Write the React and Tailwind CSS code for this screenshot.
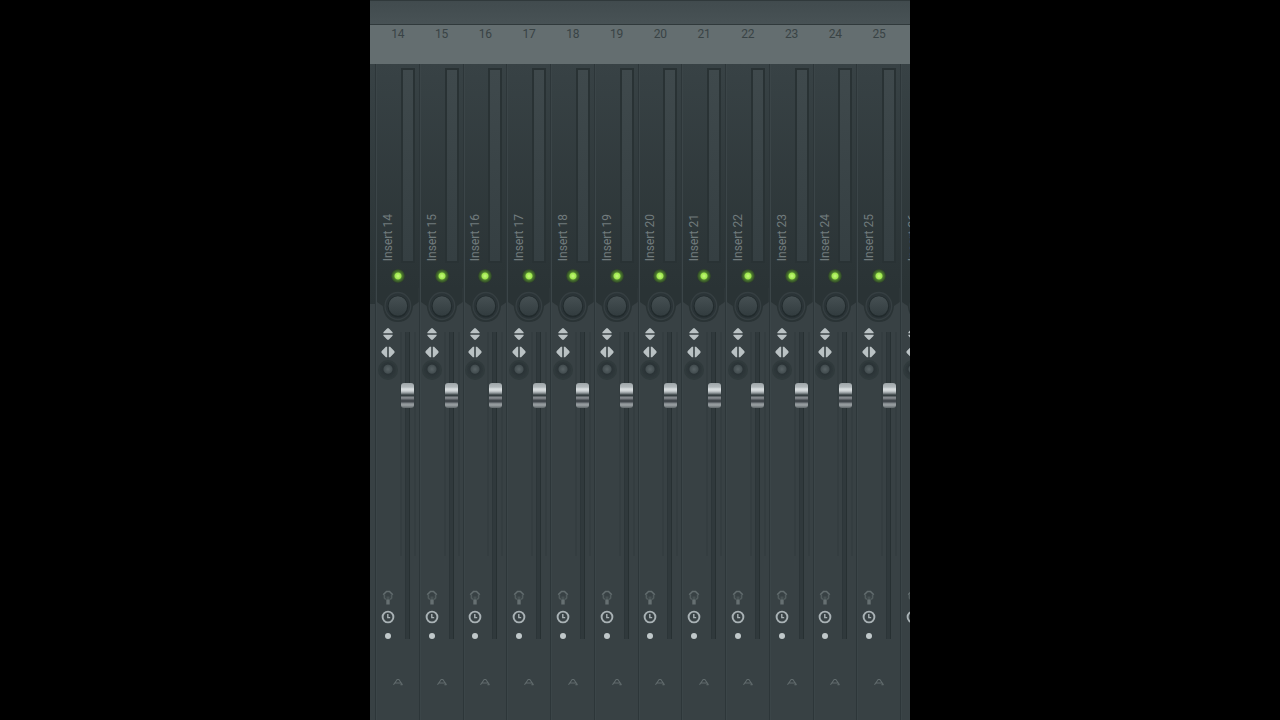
import { useState } from 'react'
import clsx from 'clsx'

const TRACKS = [14, 15, 16, 17, 18, 19, 20, 21, 22, 23, 24, 25]

function SwapVerticalIcon() {
  return (
    <svg width="10" height="12" viewBox="0 0 10 12" fill="#bac2c4">
      <path d="M4.3 0.3h1.4L9.6 4.2v1.1H0.4V4.2zM4.3 11.7h1.4l3.9-3.9V6.7H0.4v1.1z" />
    </svg>
  )
}

function SwapHorizontalIcon() {
  return (
    <svg width="14" height="12" viewBox="0 0 14 12" fill="#bac2c4">
      <path d="M6.2 0.8v10.4H4.9L0.5 6.8V5.2l4.4-4.4zM7.8 0.8v10.4h1.3l4.4-4.4V5.2L9.1 0.8z" />
    </svg>
  )
}

function PlugIcon() {
  return (
    <svg width="12" height="16" viewBox="0 0 12 16" fill="none">
      <path d="M1.2 4.7L4.5 1.5h3l3.3 3.2" stroke="#626c6e" strokeWidth="1.6" />
      <path d="M2.4 4.5V8l1.4 1.5M9.6 4.5V8L8.2 9.5" stroke="#535d5f" strokeWidth="1.6" />
      <path d="M6 6.5V10" stroke="#485254" strokeWidth="3" />
      <path d="M6 9.5v5" stroke="#667072" strokeWidth="3.4" />
    </svg>
  )
}

function ClockIcon() {
  return (
    <svg width="14" height="14" viewBox="0 0 14 14" fill="none" stroke="#a9b2b5">
      <circle cx="7" cy="7" r="5.4" strokeWidth="1.9" />
      <path d="M6.8 4v3.6h2.4" strokeWidth="1.4" />
    </svg>
  )
}

function RouteIcon() {
  return (
    <svg width="12" height="8" viewBox="0 0 12 8" fill="none" stroke="#616b6d" strokeWidth="1.1">
      <path d="M1.5 6.8L5.2 1.5h1.6l3.7 5.3M2.8 5h6.4M8.4 6.8h2.1" />
    </svg>
  )
}

// Bottom edge of the dark meter area, wrapping round the pan knob
function PanKnob() {
  return (
    <svg className="block h-9 w-full" viewBox="0 0 44 36" preserveAspectRatio="none">
      <defs>
        <linearGradient id="knob" x1="0" y1="0" x2="0" y2="1">
          <stop offset="0" stopColor="#465053" />
          <stop offset="1" stopColor="#323c3f" />
        </linearGradient>
      </defs>
      <path d="M0 0H44V14L38 18Q36 34 22 34Q8 34 6 18L0 14z" fill="#2a3335" />
      <circle cx="22" cy="18" r="13.5" fill="#2b3437" stroke="#363f42" strokeWidth="1.4" />
      <circle cx="22" cy="18.5" r="10.8" fill="#212a2c" />
      <circle cx="22" cy="18" r="9.8" fill="url(#knob)" />
    </svg>
  )
}

function Fader({ name }) {
  const [volume, setVolume] = useState(82)

  return (
    <input
      type="range"
      aria-label={`${name} volume`}
      min="0"
      max="100"
      value={volume}
      onChange={e => setVolume(Number(e.target.value))}
      className="relative m-0 h-[307px] w-[14px] appearance-none bg-[linear-gradient(90deg,transparent_4px,#2c3538_4px,#2c3538_5px,#30393c_5px,#30393c_8px,#273032_8px,#273032_9px,transparent_9px)] [direction:rtl] [writing-mode:vertical-lr] [&::-webkit-slider-thumb]:h-[25px] [&::-webkit-slider-thumb]:w-[13px] [&::-webkit-slider-thumb]:appearance-none [&::-webkit-slider-thumb]:rounded-[3px] [&::-webkit-slider-thumb]:bg-[linear-gradient(180deg,#9aa2a5_0px,#a9b0b3_2px,#b0b7ba_4px,#d9dee0_6px,#ccd2d4_8px,#8f979a_10px,#646c6f_11px,#343d40_12px,#343d40_13px,#868b8f_14px,#73787d_16px,#41474c_17px,#41474c_19px,#7d8388_20px,#9ca2a5_22px,#5d6568_25px)]"
    />
  )
}

function Strip({ number, className }) {
  const [enabled, setEnabled] = useState(true)
  const name = `Insert ${number}`

  return (
    <section
      aria-label={name}
      className={clsx(
        'flex flex-col border-r border-l border-l-[#3b4548] border-r-[#2d3639] bg-[#384144]',
        className
      )}
    >
      {/* Name and peak meter */}
      <div className="flex h-56 flex-col bg-linear-to-b from-[#384245] to-[#2a3335] pt-1">
        <div className="flex justify-center">
          <div className="flex w-5 items-end justify-center pb-0.5">
            <span className="rotate-180 text-xs leading-4 whitespace-nowrap text-[#717b7d] [writing-mode:vertical-rl]">
              {name}
            </span>
          </div>
          <div className="flex w-5 justify-center">
            <div className="h-[195px] w-[14px] border-2 border-[#293234] bg-linear-to-b from-[#3f494c] to-[#353f42]" />
          </div>
        </div>
        <div className="flex flex-1 items-center justify-center pt-px">
          <input
            type="checkbox"
            aria-label={`${name} enabled`}
            checked={enabled}
            onChange={e => setEnabled(e.target.checked)}
            className="size-[14px] appearance-none rounded-full bg-[#263022] checked:bg-[radial-gradient(circle,#c8f780_0px,#9ce64b_3px,#4f7d2e_4px,#36542a_6px,#2c3c2b_7px)]"
          />
        </div>
      </div>

      <button type="button" aria-label={`${name} pan`}>
        <PanKnob />
      </button>

      {/* Switches on the left, fader on the right */}
      <div className="flex justify-center">
        <div className="flex h-80 w-5 flex-col items-center">
          <button type="button" aria-label="Swap polarity" className="flex h-5 items-center">
            <SwapVerticalIcon />
          </button>
          <button type="button" aria-label="Swap channels" className="flex h-4 items-center">
            <SwapHorizontalIcon />
          </button>
          <button
            type="button"
            aria-label="Stereo separation"
            className="size-5 shrink-0 rounded-full border-2 border-[#303a3c] bg-[radial-gradient(circle_at_50%_45%,#586265_0px,#444e51_4px,#2a3336_5px,#2f383b_8px)]"
          />
          <div className="mt-auto flex flex-col items-center gap-1">
            <button type="button" aria-label="Effect slots">
              <PlugIcon />
            </button>
            <button type="button" aria-label="Latency">
              <ClockIcon />
            </button>
            <button type="button" aria-label="Arm recording" className="flex h-4 items-center">
              <span className="size-[6px] rounded-full bg-[#c0c8ca]" />
            </button>
          </div>
        </div>
        <div className="flex w-5 justify-center pt-2">
          <div className="flex h-56 w-4 justify-center border-x-2 border-[#343d40]">
            <Fader name={name} />
          </div>
        </div>
      </div>

      <div className="flex flex-1 items-start justify-center pt-[34px] pb-8">
        <button type="button" aria-label="Route to track">
          <RouteIcon />
        </button>
      </div>
    </section>
  )
}

export default function App() {
  return (
    <div className="flex min-h-screen justify-center bg-black font-[Roboto,'Liberation_Sans',sans-serif]">
      <main className="flex w-[42.1875%] flex-col overflow-hidden bg-[#384144]">
        <header className="h-6 border-t border-[#30393b] bg-linear-to-b from-[#414b4e] to-[#485255]" />

        <div className="flex h-10 border-t border-[#30393b] bg-[#646e70] pr-[9px] pl-[6px]">
          <div className="grid flex-1 grid-cols-12">
            {TRACKS.map(n => (
              <span key={n} className="text-center text-xs leading-[18px] text-[#394345]">
                {n}
              </span>
            ))}
          </div>
        </div>

        <div className="flex flex-1">
          {/* Edge of the strip scrolled out on the left */}
          <div className="w-[6px] border-r border-[#2d3639]">
            <div className="h-60 bg-linear-to-b from-[#384245] to-[#2a3335]" />
          </div>
          <div className="grid flex-1 grid-cols-12">
            {TRACKS.map(n => (
              <Strip key={n} number={n} />
            ))}
          </div>
          <div className="flex w-[9px] overflow-hidden">
            <Strip number={26} className="w-11 shrink-0" />
          </div>
        </div>
      </main>
    </div>
  )
}
